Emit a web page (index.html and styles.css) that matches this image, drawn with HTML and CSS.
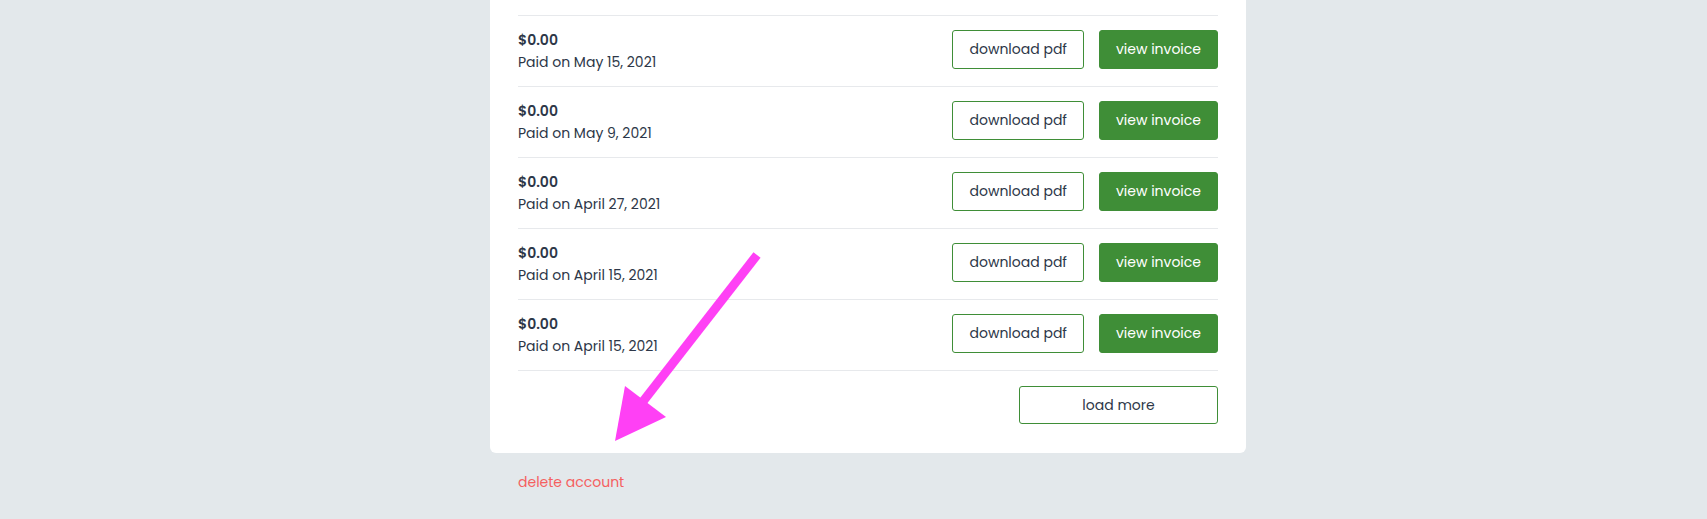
FILE: index.html
```html
<!DOCTYPE html>
<html lang="en">
<head>
    <meta charset="UTF-8">
    <meta name="viewport" content="width=device-width, initial-scale=1.0">
    <title>Billing</title>
    <link rel="stylesheet" href="styles.css">
</head>
<body>
    <div class="page">
        <div class="card">
            <div class="invoice">
                <div class="invoice-info">
                    <div class="amount">$0.00</div>
                    <div class="paid">Paid on May 15, 2021</div>
                </div>
                <div class="actions">
                    <button class="btn btn-outline">download pdf</button>
                    <button class="btn btn-green">view invoice</button>
                </div>
            </div>
            <div class="invoice">
                <div class="invoice-info">
                    <div class="amount">$0.00</div>
                    <div class="paid">Paid on May 9, 2021</div>
                </div>
                <div class="actions">
                    <button class="btn btn-outline">download pdf</button>
                    <button class="btn btn-green">view invoice</button>
                </div>
            </div>
            <div class="invoice">
                <div class="invoice-info">
                    <div class="amount">$0.00</div>
                    <div class="paid">Paid on April 27, 2021</div>
                </div>
                <div class="actions">
                    <button class="btn btn-outline">download pdf</button>
                    <button class="btn btn-green">view invoice</button>
                </div>
            </div>
            <div class="invoice">
                <div class="invoice-info">
                    <div class="amount">$0.00</div>
                    <div class="paid">Paid on April 15, 2021</div>
                </div>
                <div class="actions">
                    <button class="btn btn-outline">download pdf</button>
                    <button class="btn btn-green">view invoice</button>
                </div>
            </div>
            <div class="invoice">
                <div class="invoice-info">
                    <div class="amount">$0.00</div>
                    <div class="paid">Paid on April 15, 2021</div>
                </div>
                <div class="actions">
                    <button class="btn btn-outline">download pdf</button>
                    <button class="btn btn-green">view invoice</button>
                </div>
            </div>
            <div class="load-row">
                <button class="btn btn-outline btn-load">load more</button>
            </div>
        </div>
        <a class="delete-link" href="#">delete account</a>
    </div>

    <!-- annotation arrow drawn over the page -->
    <svg class="arrow" width="1707" height="519" viewBox="0 0 1707 519">
        <line x1="757" y1="255" x2="641" y2="404" stroke="#ff40f5" stroke-width="9"/>
        <polygon points="625,386 666,417 615,441" fill="#ff40f5"/>
    </svg>
</body>
</html>
```

FILE: styles.css
```css
body {
    margin: 0;
    background-color: #e3e8eb;
    font-family: Poppins, "Open Sans", sans-serif;
    color: #2d3748;
    overflow: hidden;
}

.page {
    width: 756px;
    margin-left: 490px;
}

.card {
    background-color: white;
    padding: 15px 28px 29px;
    border-radius: 0 0 6px 6px;
}

.invoice {
    display: flex;
    justify-content: space-between;
    align-items: center;
    border-top: 1px solid #e7e9ec;
    padding: 13px 0;
}

.amount {
    font-size: 14px;
    font-weight: 600;
    line-height: 22px;
}

.paid {
    font-size: 14px;
    line-height: 22px;
}

.actions {
    display: flex;
    gap: 15px;
    margin-top: -3px;
}

.btn {
    font-family: inherit;
    font-size: 14px;
    height: 39px;
    padding: 0 16px;
    border-radius: 3px;
    cursor: pointer;
}

.btn-outline {
    background-color: white;
    color: #2d3748;
    border: 1px solid #3f8e37;
}

.btn-green {
    background-color: #3f8e37;
    color: white;
    border: 1px solid #3f8e37;
}

.load-row {
    display: flex;
    justify-content: flex-end;
    border-top: 1px solid #e7e9ec;
    padding-top: 15px;
}

.btn-load {
    width: 199px;
    height: 38px;
}

.delete-link {
    display: inline-block;
    margin: 19px 0 0 28px;
    font-size: 14px;
    color: #f56060;
    text-decoration: none;
}

.arrow {
    position: absolute;
    left: 0;
    top: 0;
}
```
